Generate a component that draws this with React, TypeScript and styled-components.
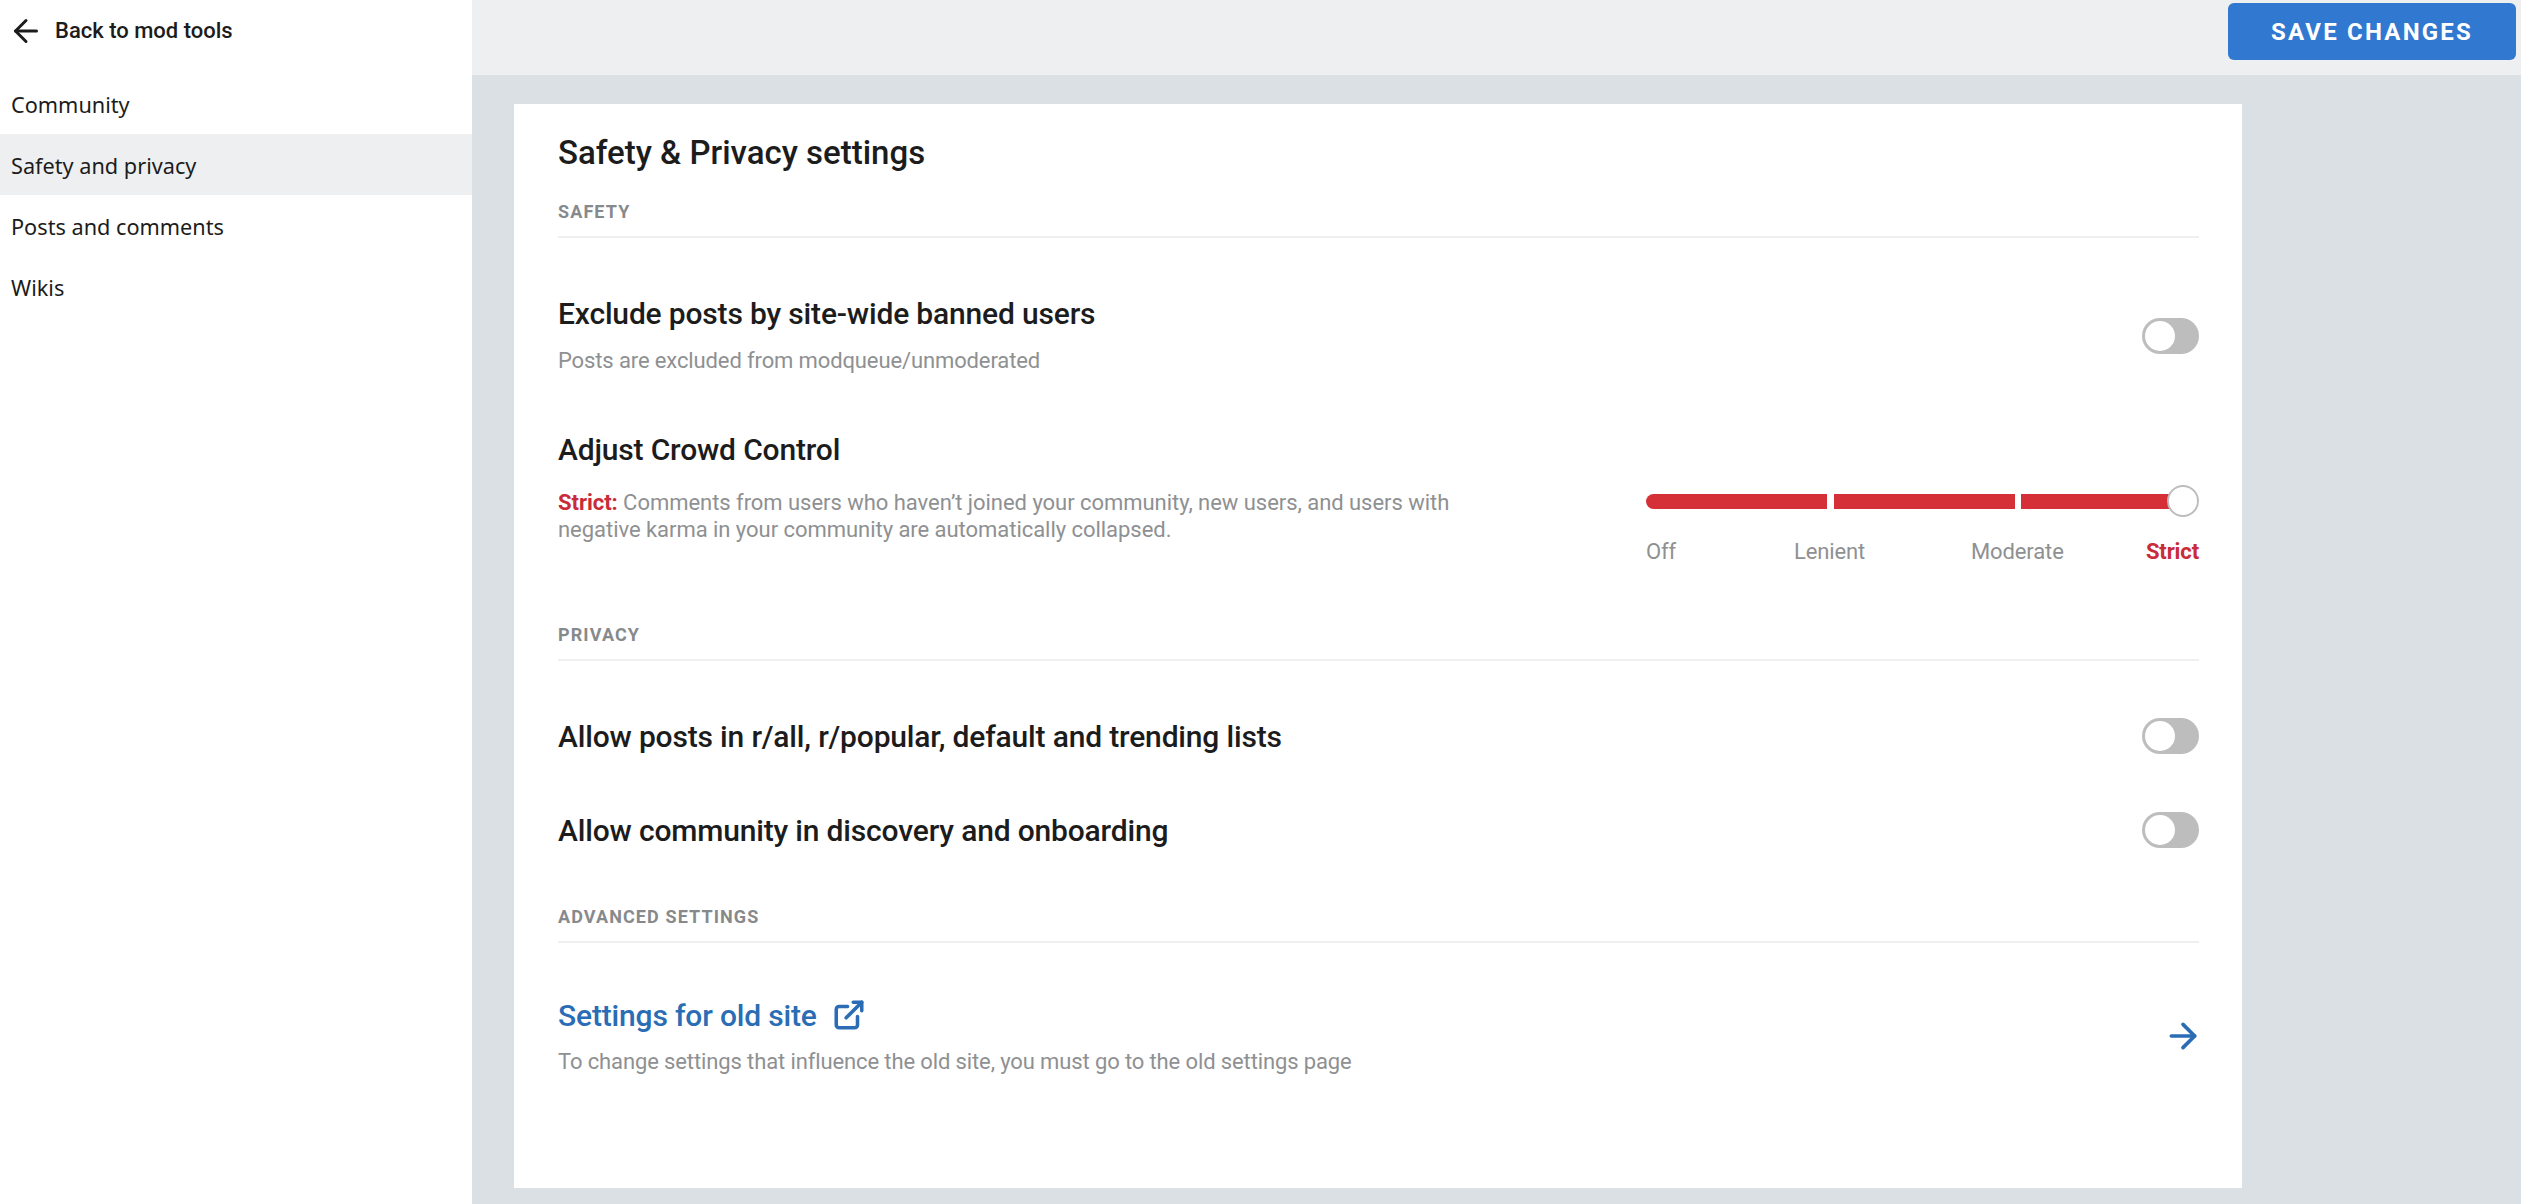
import React from "react";
import styled, { createGlobalStyle } from "styled-components";
import { ArrowLeft, ArrowRight, ExternalLink } from "lucide-react";

const PLEX = `"Roboto", "Liberation Sans", sans-serif`;

const GlobalStyle = createGlobalStyle`
  html, body {
    margin: 0;
    padding: 0;
    height: 100%;
    overflow: hidden;
  }
  * { box-sizing: border-box; }
`;

const Page = styled.div`
  display: flex;
  width: 2521px;
  height: 1204px;
  background-color: #dae0e4;
  font-family: ${PLEX};
`;

const Sidebar = styled.nav`
  flex: 0 0 472px;
  background-color: #fff;
  font-family: "Noto Sans", sans-serif;
`;

const BackRow = styled.div`
  display: flex;
  align-items: center;
  height: 73px;
  padding: 0 0 12px 8px;
  gap: 11px;
  color: #1c1c1c;
  font-family: ${PLEX};
  font-size: 22px;
  font-weight: 500;
`;

const NavItem = styled.div<{ $active?: boolean }>`
  display: flex;
  align-items: center;
  height: 61px;
  padding: 2px 0 0 11px;
  font-size: 21.7px;
  color: #1c1c1c;
  background-color: ${(p) => (p.$active ? "#edeff1" : "transparent")};
`;

const Main = styled.div`
  flex: 1;
  display: flex;
  flex-direction: column;
`;

const TopBar = styled.div`
  display: flex;
  justify-content: flex-end;
  height: 75px;
  padding: 3px 5px 0 0;
  background-color: #edeff1;
`;

const SaveButton = styled.button`
  width: 288px;
  height: 57px;
  border: none;
  border-radius: 6px;
  background-color: #3078d0;
  color: #fff;
  font-family: ${PLEX};
  font-size: 24px;
  font-weight: 700;
  letter-spacing: 2.2px;
`;

const Card = styled.section`
  width: 1728px;
  height: 1084px;
  margin: 29px 0 0 42px;
  padding: 26px 43px 0 44px;
  background-color: #fff;
`;

const Heading = styled.h1`
  margin: 0;
  height: 46px;
  line-height: 46px;
  font-size: 33px;
  font-weight: 500;
  color: #1c1c1c;
`;

const SectionLabel = styled.div<{ $top: number }>`
  margin-top: ${(p) => p.$top}px;
  height: 41px;
  line-height: 22px;
  padding-top: 4px;
  border-bottom: 2px solid #edeff1;
  font-size: 18px;
  font-weight: 700;
  letter-spacing: 1.1px;
  color: #878a8c;
`;

const Row = styled.div<{ $top: number; $alignTop?: boolean }>`
  display: flex;
  align-items: ${(p) => (p.$alignTop ? "flex-start" : "center")};
  justify-content: space-between;
  margin-top: ${(p) => p.$top}px;
`;

const RowText = styled.div<{ $gap: number }>`
  display: flex;
  flex-direction: column;
  gap: ${(p) => p.$gap}px;
`;

const RowTitle = styled.div<{ $link?: boolean }>`
  display: flex;
  align-items: center;
  gap: 15px;
  height: 40px;
  font-size: 30px;
  font-weight: 500;
  letter-spacing: -0.17px;
  color: ${(p) => (p.$link ? "#2a6db5" : "#1c1c1c")};
`;

const RowDescription = styled.div<{ $wide?: boolean }>`
  font-size: 22px;
  line-height: 27px;
  letter-spacing: ${(p) => (p.$wide ? "-0.04px" : "-0.12px")};
  color: #8e9092;
  max-width: 960px;
`;

const StrictWord = styled.strong`
  color: #c92c38;
  font-weight: 700;
`;

const Toggle = styled.div<{ $nudge?: number }>`
  position: relative;
  width: 57px;
  height: 36px;
  margin-top: ${(p) => p.$nudge ?? 0}px;
  border-radius: 18px;
  background-color: #bdbdbd;

  &::after {
    content: "";
    position: absolute;
    top: 3px;
    left: 3px;
    width: 30px;
    height: 30px;
    border-radius: 50%;
    background-color: #fff;
  }
`;

const SliderBlock = styled.div`
  width: 553px;
  padding-top: 56px;
`;

const Track = styled.div`
  position: relative;
  display: flex;
  gap: 6.5px;
  width: 100%;
  height: 32px;
  padding-right: 16px;
  align-items: center;
`;

const TrackSegment = styled.div<{ $first?: boolean; $last?: boolean }>`
  flex: ${(p) => (p.$last ? "1" : "0 0 181px")};
  height: 15px;
  background-color: #d52f38;
  border-radius: ${(p) => (p.$first ? "8px 0 0 8px" : "0")};
`;

const Thumb = styled.div`
  position: absolute;
  right: 0;
  top: 0;
  width: 32px;
  height: 32px;
  border-radius: 50%;
  border: 2px solid #bdbdbd;
  background-color: #fff;
`;

const SliderLabels = styled.div`
  display: grid;
  grid-template-columns: 148px 177px 1fr auto;
  margin-top: 21px;
  font-size: 22px;
  line-height: 27px;
  letter-spacing: -0.12px;
  color: #8e9092;
`;

const StrictLabel = styled.span`
  color: #c92c38;
  font-weight: 700;
`;

const BackIcon = styled(ArrowLeft)`
  flex: none;
`;

const LinkIcon = styled(ExternalLink)`
  flex: none;
`;

const GoIcon = styled(ArrowRight)`
  margin: 2px -4px 0 0;
  color: #2a6db5;
`;

export default function App() {
  return (
    <>
      <GlobalStyle />
      <Page>
        <Sidebar>
          <BackRow>
            <BackIcon size={36} strokeWidth={2} />
            Back to mod tools
          </BackRow>
          <NavItem>Community</NavItem>
          <NavItem $active>Safety and privacy</NavItem>
          <NavItem>Posts and comments</NavItem>
          <NavItem>Wikis</NavItem>
        </Sidebar>
        <Main>
          <TopBar>
            <SaveButton>SAVE CHANGES</SaveButton>
          </TopBar>
          <Card>
            <Heading>Safety &amp; Privacy settings</Heading>
            <SectionLabel $top={21}>SAFETY</SectionLabel>
            <Row $top={55}>
              <RowText $gap={14}>
                <RowTitle>Exclude posts by site-wide banned users</RowTitle>
                <RowDescription>Posts are excluded from modqueue/unmoderated</RowDescription>
              </RowText>
              <Toggle $nudge={5} />
            </Row>
            <Row $top={55} $alignTop>
              <RowText $gap={20}>
                <RowTitle>Adjust Crowd Control</RowTitle>
                <RowDescription $wide>
                  <StrictWord>Strict:</StrictWord> Comments from users who haven’t joined your community, new users, and users with negative karma in your community are automatically collapsed.
                </RowDescription>
              </RowText>
              <SliderBlock>
                <Track>
                  <TrackSegment $first />
                  <TrackSegment />
                  <TrackSegment $last />
                  <Thumb />
                </Track>
                <SliderLabels>
                  <span>Off</span>
                  <span>Lenient</span>
                  <span>Moderate</span>
                  <StrictLabel>Strict</StrictLabel>
                </SliderLabels>
              </SliderBlock>
            </Row>
            <SectionLabel $top={55}>PRIVACY</SectionLabel>
            <Row $top={55}>
              <RowTitle>Allow posts in r/all, r/popular, default and trending lists</RowTitle>
              <Toggle />
            </Row>
            <Row $top={54}>
              <RowTitle>Allow community in discovery and onboarding</RowTitle>
              <Toggle />
            </Row>
            <SectionLabel $top={52}>ADVANCED SETTINGS</SectionLabel>
            <Row $top={52}>
              <RowText $gap={13}>
                <RowTitle $link>
                  Settings for old site
                  <LinkIcon size={34} strokeWidth={2.5} />
                </RowTitle>
                <RowDescription>To change settings that influence the old site, you must go to the old settings page</RowDescription>
              </RowText>
              <GoIcon size={40} strokeWidth={2.2} />
            </Row>
          </Card>
        </Main>
      </Page>
    </>
  );
}
